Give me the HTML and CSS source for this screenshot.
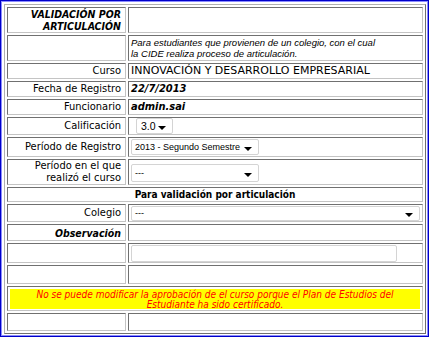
FILE: index.html
```html
<!DOCTYPE html>
<html lang="es">
<head>
    <meta charset="UTF-8">
    <title>Validación por articulación</title>
    <link rel="stylesheet" href="styles.css">
</head>
<body>
    <div class="frame">
        <div class="frame-inner">
            <table class="form-table">
                <colgroup>
                    <col class="col-label">
                    <col>
                </colgroup>
                <tr class="h26">
                    <td class="label title">VALIDACIÓN POR ARTICULACIÓN</td>
                    <td></td>
                </tr>
                <tr class="h26">
                    <td></td>
                    <td class="note">Para estudiantes que provienen de un colegio, con el cual<br>la CIDE realiza proceso de articulación.</td>
                </tr>
                <tr class="h16">
                    <td class="label">Curso</td>
                    <td class="value">INNOVACIÓN Y DESARROLLO EMPRESARIAL</td>
                </tr>
                <tr class="h16">
                    <td class="label">Fecha de Registro</td>
                    <td class="value strong">22/7/2013</td>
                </tr>
                <tr class="h16">
                    <td class="label">Funcionario</td>
                    <td class="value strong">admin.sai</td>
                </tr>
                <tr class="h18">
                    <td class="label">Calificación</td>
                    <td class="value">
                        <div class="select select-grade"><span>3.0</span><i class="arrow"></i></div>
                    </td>
                </tr>
                <tr class="h20">
                    <td class="label">Período de Registro</td>
                    <td class="value">
                        <div class="select select-period"><span>2013 - Segundo Semestre</span><i class="arrow"></i></div>
                    </td>
                </tr>
                <tr class="h25">
                    <td class="label">Período en el que<br>realizó el curso</td>
                    <td class="value">
                        <div class="select select-period tall"><span>---</span><i class="arrow"></i></div>
                    </td>
                </tr>
                <tr class="h15">
                    <td class="section" colspan="2">Para validación por articulación</td>
                </tr>
                <tr class="h18">
                    <td class="label">Colegio</td>
                    <td class="value">
                        <div class="select select-wide"><span>---</span><i class="arrow"></i></div>
                    </td>
                </tr>
                <tr class="h17">
                    <td class="label strong">Observación</td>
                    <td></td>
                </tr>
                <tr class="h20">
                    <td></td>
                    <td class="value"><div class="text-input"></div></td>
                </tr>
                <tr class="h19">
                    <td></td>
                    <td></td>
                </tr>
                <tr class="h25">
                    <td colspan="2" class="msg-cell">
                        <div class="warning">No se puede modificar la aprobación de el curso porque el Plan de Estudios del<br>Estudiante ha sido certificado.</div>
                    </td>
                </tr>
                <tr class="h18">
                    <td></td>
                    <td></td>
                </tr>
            </table>
        </div>
    </div>
</body>
</html>
```

FILE: styles.css
```css
/* old style framed form */
body {
    margin: 0;
    background: #ffffff;
    font-family: "DejaVu Sans Condensed", "DejaVu Sans", sans-serif;
    font-size: 11px;
    color: #000;
}

.frame {
    width: 429px;
    box-sizing: border-box;
    border: 1px solid #0000c8;
}

.frame-inner {
    border: 1px solid #8c8cff;
    padding: 2px 1px 1px 2px;
}

.form-table {
    width: 100%;
    table-layout: fixed;
    border-collapse: separate;
    border-spacing: 2px;
    border: 1px solid;
    border-color: #b0b0b0 #707070 #707070 #b0b0b0;
}

.col-label {
    width: 119px;
}

.form-table td {
    border: 1px solid;
    border-color: #707070 #c4c4c4 #c4c4c4 #707070;
    padding: 0 2px;
    line-height: 12px;
    vertical-align: middle;
    white-space: nowrap;
}

.h15 { height: 15px; }
.h16 { height: 16px; }
.h17 { height: 17px; }
.h18 { height: 18px; }
.h19 { height: 19px; }
.h20 { height: 20px; }
.h25 { height: 25px; }
.h26 { height: 26px; }

.form-table td.label {
    text-align: right;
    padding-right: 4px;
}

.title {
    font-weight: bold;
    font-style: italic;
    font-size: 10.5px;
    white-space: normal !important;
}

.strong {
    font-weight: bold;
    font-style: italic;
}

td.label.strong {
    font-size: 10.5px;
}

.note {
    font-family: "Liberation Sans", Arial, sans-serif;
    font-style: italic;
    font-size: 9.5px;
    line-height: 11px !important;
}

.value {
    font-family: "DejaVu Sans", Verdana, sans-serif;
    font-size: 11px;
}

.value.strong {
    font-family: "DejaVu Sans Condensed", "DejaVu Sans", sans-serif;
}

.section {
    text-align: center;
    font-weight: bold;
    font-size: 10px;
}

.select {
    display: flex;
    align-items: center;
    justify-content: space-between;
    height: 16px;
    border: 1px solid #d4d4d4;
    border-radius: 2px;
    font-family: "Liberation Sans", Arial, sans-serif;
    font-size: 9px;
    padding: 0 6px 0 3px;
    box-sizing: border-box;
    overflow: hidden;
}

.select-grade {
    width: 37px;
    margin-left: 5px;
    font-size: 10.5px;
    padding-left: 4px;
}

.select-period {
    width: 128px;
}

.select-period.tall {
    height: 18px;
    margin-top: 2px;
}

.select-wide {
    width: 100%;
    height: 15px;
}

.arrow {
    flex: none;
    width: 0;
    height: 0;
    border-left: 4px solid transparent;
    border-right: 4px solid transparent;
    border-top: 4px solid #000;
    margin-top: 4px;
}

.text-input {
    width: 266px;
    height: 17px;
    box-sizing: border-box;
    border: 1px solid #d4d4d4;
    border-radius: 2px;
}

.form-table td.msg-cell {
    padding: 1px 2px;
}

.warning {
    background: #ffff00;
    color: #ff0000;
    font-style: italic;
    text-align: center;
    font-size: 10px;
    line-height: 10px;
    padding: 1px 2px 0;
    height: 20px;
    box-sizing: border-box;
}
```
